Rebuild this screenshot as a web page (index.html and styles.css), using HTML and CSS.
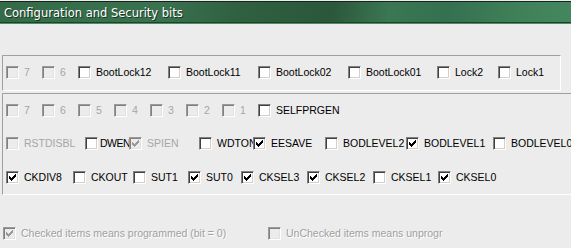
FILE: index.html
```html
<!DOCTYPE html>
<html lang="en">
<head>
    <meta charset="UTF-8">
    <title>Configuration and Security bits</title>
    <link rel="stylesheet" href="styles.css">
</head>
<body>
    <svg class="defs" width="0" height="0">
        <symbol id="chk" viewBox="0 0 11 11">
            <path d="M2 4h1v3h-1zM3 5h1v3h-1zM4 6h1v3h-1zM5 5h1v3h-1zM6 4h1v3h-1zM7 3h1v3h-1zM8 2h1v3h-1z"/>
        </symbol>
    </svg>

    <div class="titlebar">Configuration and Security bits</div>

    <div class="group lockbits">
        <div class="row row-lock">
            <span class="cb dis"><span class="box"></span>7</span>
            <span class="cb dis"><span class="box"></span>6</span>
            <span class="cb"><span class="box"></span>BootLock12</span>
            <span class="cb"><span class="box"></span>BootLock11</span>
            <span class="cb"><span class="box"></span>BootLock02</span>
            <span class="cb"><span class="box"></span>BootLock01</span>
            <span class="cb"><span class="box"></span>Lock2</span>
            <span class="cb"><span class="box"></span>Lock1</span>
        </div>
    </div>

    <div class="group fuses">
        <div class="row row-ext">
            <span class="cb dis"><span class="box"></span>7</span>
            <span class="cb dis"><span class="box"></span>6</span>
            <span class="cb dis"><span class="box"></span>5</span>
            <span class="cb dis"><span class="box"></span>4</span>
            <span class="cb dis"><span class="box"></span>3</span>
            <span class="cb dis"><span class="box"></span>2</span>
            <span class="cb dis"><span class="box"></span>1</span>
            <span class="cb"><span class="box"></span>SELFPRGEN</span>
        </div>
        <div class="row row-high">
            <span class="cb dis"><span class="box"></span>RSTDISBL</span>
            <span class="cb tight"><span class="box"></span>DWEN</span>
            <span class="cb dis"><span class="box"><svg><use href="#chk"/></svg></span>SPIEN</span>
            <span class="cb"><span class="box"></span>WDTON</span>
            <span class="cb"><span class="box"><svg><use href="#chk"/></svg></span>EESAVE</span>
            <span class="cb"><span class="box"></span>BODLEVEL2</span>
            <span class="cb"><span class="box"><svg><use href="#chk"/></svg></span>BODLEVEL1</span>
            <span class="cb"><span class="box"></span>BODLEVEL0</span>
        </div>
        <div class="row row-low">
            <span class="cb"><span class="box"><svg><use href="#chk"/></svg></span>CKDIV8</span>
            <span class="cb"><span class="box"></span>CKOUT</span>
            <span class="cb"><span class="box"></span>SUT1</span>
            <span class="cb"><span class="box"><svg><use href="#chk"/></svg></span>SUT0</span>
            <span class="cb"><span class="box"><svg><use href="#chk"/></svg></span>CKSEL3</span>
            <span class="cb"><span class="box"><svg><use href="#chk"/></svg></span>CKSEL2</span>
            <span class="cb"><span class="box"></span>CKSEL1</span>
            <span class="cb"><span class="box"><svg><use href="#chk"/></svg></span>CKSEL0</span>
        </div>
    </div>

    <div class="legend">
        <span class="cb dis etched"><span class="box"><svg><use href="#chk"/></svg></span>Checked items means programmed (bit = 0)</span>
        <span class="cb dis etched"><span class="box"></span>UnChecked items means unprogrammed (bit = 1)</span>
    </div>
</body>
</html>
```

FILE: styles.css
```css
html {
    overflow: hidden;
}

body {
    width: 571px;
    height: 248px;
    margin: 0;
    padding-top: 1px;
    box-sizing: border-box;
    background-color: #ececec;
    font-family: "Liberation Sans", Arial, sans-serif;
    font-size: 10.5px;
    color: #000000;
}

.defs {
    position: absolute;
}

.titlebar {
    height: 20px;
    padding-left: 4px;
    border-top: 1px solid #16251b;
    border-bottom: 1px solid #1d4329;
    box-shadow: 0 1px 0 #4f8f66;
    background: linear-gradient(100deg, #346a47 0%, #3a7250 28%, #2f6040 42%, #2b573a 58%, #3b7752 68%, #357050 78%, #3f8058 90%, #44875e 100%);
    color: #ffffff;
    font-family: "DejaVu Sans", sans-serif;
    font-size: 11.5px;
    line-height: 22px;
    text-shadow: 1px 1px 0 #1a3322;
}

/* etched group boxes */
.group {
    border-top: 1px solid #a0a0a0;
    border-left: 1px solid #a0a0a0;
    border-right: 1px solid #ffffff;
    border-bottom: 1px solid #ffffff;
    margin-left: 2px;
}

.lockbits {
    margin-top: 32px;
    margin-right: 10px;
    height: 32px;
    padding-bottom: 2px;
}

.fuses {
    margin-top: 2px;
    margin-right: -20px;
}

.row {
    display: grid;
    align-items: center;
    height: 34px;
    padding-left: 3px;
}

.lockbits .row {
    height: 32px;
}

.fuses .row:first-child {
    height: 32px;
}

.row-lock {
    grid-template-columns: 36px 36px 90px 90px 90px 89px 61px auto;
}

.row-ext {
    grid-template-columns: repeat(7, 36px) auto;
}

.row-high {
    grid-template-columns: 79px 44px 70px 54px 72px 81px 87px auto;
}

.row-low {
    grid-template-columns: 67px 60px 55px 53px 66px 66px 65px auto;
}

/* checkbox */
.cb {
    display: flex;
    align-items: center;
    gap: 5px;
    white-space: nowrap;
    overflow: hidden;
}

.cb.tight {
    gap: 2px;
    letter-spacing: -0.5px;
}

.box {
    flex: none;
    width: 13px;
    height: 13px;
    box-sizing: border-box;
    border: 1px solid;
    border-color: #808080 #ffffff #ffffff #808080;
    box-shadow: inset 1px 1px 0 #404040, inset -1px -1px 0 #d4d0c8;
    background-color: #ffffff;
}

.box svg {
    display: block;
    width: 11px;
    height: 11px;
    fill: #000000;
}

.dis {
    color: #a6a6a6;
}

.dis .box {
    border-color: #9a9a9a #ffffff #ffffff #9a9a9a;
    box-shadow: inset 1px 1px 0 #808080, inset -1px -1px 0 #e2e2e2;
    background-color: #ececec;
}

.dis .box svg {
    fill: #9a9a9a;
}

.legend {
    display: grid;
    grid-template-columns: 265px 175px;
    align-items: center;
    height: 16px;
    margin-top: 30px;
    padding-left: 3px;
}

.etched {
    color: #a0a0a0;
    text-shadow: 1px 1px 0 #ffffff;
}
```
